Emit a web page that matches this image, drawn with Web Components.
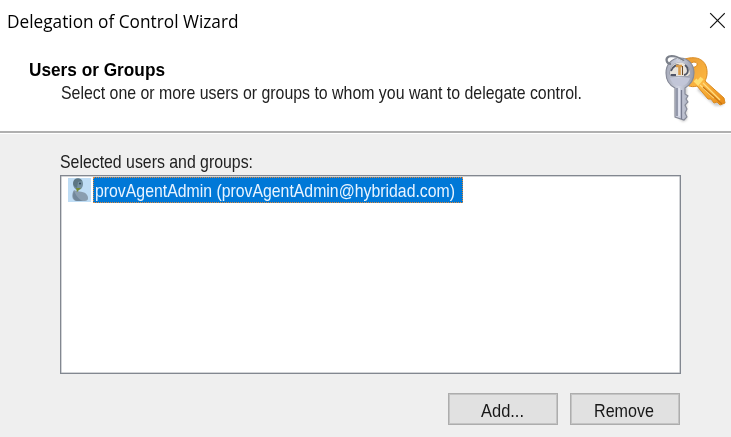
<!DOCTYPE html>
<html lang="en"><head><meta charset="utf-8"><title>Delegation of Control Wizard</title>
<style>html,body{margin:0;width:731px;height:437px;overflow:hidden;background:#efefef}</style></head>
<body>
<wizard-dialog></wizard-dialog>
<script>
// Single line of text condensed or stretched to the given advance width.
class FitText extends HTMLElement {
  constructor(){
    super();
    this.attachShadow({mode:'open'}).innerHTML = `<style>
      :host{display:block;white-space:nowrap}
      span{display:inline-block;transform-origin:0 50%}
    </style><span><slot></slot></span>`;
  }
  connectedCallback(){
    const w = parseFloat(this.getAttribute('fit'));
    const s = this.shadowRoot.querySelector('span');
    this.style.width = w + 'px';
    s.style.transform = `scaleX(${w / s.getBoundingClientRect().width})`;
  }
}
class CloseIcon extends HTMLElement {
  constructor(){
    super();
    this.attachShadow({mode:'open'}).innerHTML = `<style>:host{display:block}svg{display:block}</style>
    <svg width="16" height="17" viewBox="0 0 16 17"><path d="M1.200 1.200L15.800 15.800M15.800 1.200L1.200 15.800" stroke="#111" stroke-width="1.2" fill="none"/></svg>`;
  }
}
class KeysIcon extends HTMLElement {
  constructor(){
    super();
    this.attachShadow({mode:'open'}).innerHTML = `<style>:host{display:block}svg{display:block}</style>
    <svg width="68" height="75" viewBox="0 0 68 75">
      <defs>
        <linearGradient id="g" x1="0" y1="0" x2="1" y2="1"><stop offset="0" stop-color="#e89a35"/><stop offset=".5" stop-color="#fcb640"/><stop offset="1" stop-color="#e88a17"/></linearGradient>
        <linearGradient id="s" x1="0" y1="0" x2="1" y2="0"><stop offset="0" stop-color="#a5a9b8"/><stop offset=".45" stop-color="#d0d4e2"/><stop offset="1" stop-color="#9499aa"/></linearGradient>
        <filter id="b" x="-10%" y="-10%" width="120%" height="120%"><feGaussianBlur stdDeviation=".6"/></filter>
        <filter id="sh" x="-20%" y="-20%" width="140%" height="140%"><feGaussianBlur stdDeviation="1"/></filter>
      </defs>
      <g fill="#777" opacity=".35" filter="url(#sh)"><path d="M15 37h12v33l-4 2-8-6zM43 34l22 18-3 4-7 0-18-16z"/></g>
      <g filter="url(#b)">
        <path fill="url(#g)" stroke="#d98a20" stroke-width="1" fill-rule="evenodd" d="M25 9C34 6 43 8 46 16C48 22 47 27 45 31L64 48L65 53L60 55L57 52L54 53L51 49L48 49L37 36C31 38 25 35 23 31ZM31 13C29 14 31 18 35 17C39 15 37 10 31 13Z"/>
        <path d="M43 33L60 50M40 35L54 48" stroke="#ffdc80" stroke-width="1.3" fill="none"/>
        <path d="M43 37L62 54" stroke="#c87512" stroke-width="1.1" fill="none"/>
        <path d="M35 30l3 3 4-5" stroke="#ffdf70" stroke-width="4" fill="none"/>
        <path fill="url(#s)" stroke="#858997" stroke-width="1.1" fill-rule="evenodd" d="M20 8C29 8 34 15 34 23C34 30 30 35 25 38V44L28 46L26 49L28 52L25 55L27 59L25 63L27 67L24 70L15 67V38C9 35 6 30 6 23C6 14 12 8 20 8ZM19 13C14 13 10 17 10 23C10 25 11 26 13 26H27C30 26 30 22 29 19C27 15 24 13 19 13Z"/>
        <path d="M10 24C10 16 15 12.500 20 12.500C26 12.500 30 18 30 24L28 26H12Z" fill="#e9e4dc"/>
        <path d="M11 21C13 16 17 14 19 16M24 25C29 24 29 18 25 15M11 25H16" stroke="#515768" stroke-width="1.8" fill="none"/>
        <path d="M16 16H22M19.500 16V25" stroke="#d99c4c" stroke-width="2.6"/>
        <path d="M22.500 16V25" stroke="#6b4a28" stroke-width="1"/>
        <path d="M10 28H30C28 34 24 36 20 36C16 36 12 34 10 28Z" fill="#c2c6d8"/>
        <path d="M17 38V66M21.500 40V69" stroke="#777c90" stroke-width="1.3"/>
        <path d="M19.200 38V66" stroke="#e4e7f2" stroke-width="1.3"/>
        <path d="M11 14C6 14 5 8 9 6.500C14 5 19 8 24 11" stroke="#7b808a" stroke-width="2.2" fill="none"/>
        <path d="M10 8C14 6 19 9 24 12" stroke="#d8dce5" stroke-width=".8" fill="none"/>
      </g>
    </svg>`;
  }
}
class UserIcon extends HTMLElement {
  constructor(){
    super();
    this.attachShadow({mode:'open'}).innerHTML = `<style>:host{display:block}svg{display:block}</style>
    <svg width="23" height="24" viewBox="0 0 23 24"><defs><filter id="b"><feGaussianBlur stdDeviation=".5"/></filter></defs>
      <rect width="23" height="24" fill="#bfddf5"/>
      <g filter="url(#b)">
        <path d="M6 12C10 14 17 13 19 17C21 20 20 23 17 23H8C4 22 3 17 6 12Z" fill="#8a9eb0"/>
        <path d="M6 13C4 18 5 22 9 23H15C10 21 8 17 6 13Z" fill="#71879a"/>
        <path d="M7 1C11-1 15 1 15 6C15 9 13 12 10 12C7 12 5 9 5 5Z" fill="#7590a0"/>
        <path d="M6 2C9 0 12 0 14 3L10 4L9 10C6 9 4 6 6 2Z" fill="#5d7683"/>
        <path d="M8 10L9 14L13 10" fill="#768b36"/><circle cx="12" cy="5.500" r="1.1" fill="#344c5e"/>
      </g></svg>`;
  }
}
class PushButton extends HTMLElement {
  constructor(){
    super();
    this.attachShadow({mode:'open'}).innerHTML = `<style>
      :host{display:block;width:110px;height:32px}
      button{display:flex;align-items:center;justify-content:center;box-sizing:border-box;width:100%;height:100%;padding:3px 2px 0 0;border:1px solid #adadad;box-shadow:inset 0 0 0 1px #c4c4c4;border-radius:0;background:#e1e1e1;font:inherit;color:#171717}
    </style><button><slot></slot></button>`;
  }
}
class ListItem extends HTMLElement {
  constructor(){
    super();
    this.attachShadow({mode:'open'}).innerHTML = `<style>
      :host{display:flex;align-items:flex-start;gap:2px}
      user-icon{padding-top:1px}
      .sel{box-sizing:border-box;width:370px;height:26px;background:#0078d7;border:1px dotted #e08a3c;color:#e9f4ff;padding:2px 0 0 1px;line-height:23px}
    </style><user-icon></user-icon><div class="sel"><slot></slot></div>`;
  }
}
class WizardDialog extends HTMLElement {
  constructor(){
    super();
    this.attachShadow({mode:'open'}).innerHTML = `<style>
      :host{display:flex;flex-direction:column;width:731px;height:437px;background:#efefef;font:17.7px/20px "Liberation Sans",Arial,sans-serif;color:#202020}
      .title{display:flex;justify-content:space-between;box-sizing:border-box;height:48px;padding:9px 6.500px 0 7px;background:#fff;color:#000;font:17.6px/24px "Open Sans","Noto Sans",sans-serif}
      close-icon{padding-top:3px}
      header{display:flex;justify-content:space-between;box-sizing:border-box;height:85px;padding:2px 3px 0 29px;background:#fff;border-bottom:2px solid #b0b0b0}
      .head{padding-top:10px}
      .head b{display:block;color:#000;height:23px}
      .head .sub{padding-left:32px}
      main{display:flex;flex-direction:column;border-top:1px solid #fff;padding:18px 50px 0 59px}
      .label{padding-left:1px}
      .list{box-sizing:border-box;width:621px;height:199px;margin:3px 0 0 1px;border:1px solid #828790;box-shadow:inset 0 0 0 .5px #a5a9b0;background:#fff;padding:1px 0 0 7px}
      .buttons{display:flex;justify-content:flex-end;gap:12px;margin-top:19px;padding-right:1px}
    </style>
    <div class="title"><fit-text fit="231.5">Delegation of Control Wizard</fit-text><close-icon></close-icon></div>
    <header><div class="head"><b><fit-text fit="136">Users or Groups</fit-text></b>
      <div class="sub"><fit-text fit="521">Select one or more users or groups to whom you want to delegate control.</fit-text></div></div>
      <keys-icon></keys-icon></header>
    <main>
      <div class="label"><fit-text fit="193">Selected users and groups:</fit-text></div>
      <div class="list"><list-item><fit-text fit="360">provAgentAdmin (provAgentAdmin@hybridad.com)</fit-text></list-item></div>
      <div class="buttons"><push-button><fit-text fit="43">Add...</fit-text></push-button><push-button><fit-text fit="60">Remove</fit-text></push-button></div>
    </main>`;
  }
}
customElements.define('fit-text', FitText);
customElements.define('close-icon', CloseIcon);
customElements.define('keys-icon', KeysIcon);
customElements.define('user-icon', UserIcon);
customElements.define('push-button', PushButton);
customElements.define('list-item', ListItem);
customElements.define('wizard-dialog', WizardDialog);
</script>
</body></html>
